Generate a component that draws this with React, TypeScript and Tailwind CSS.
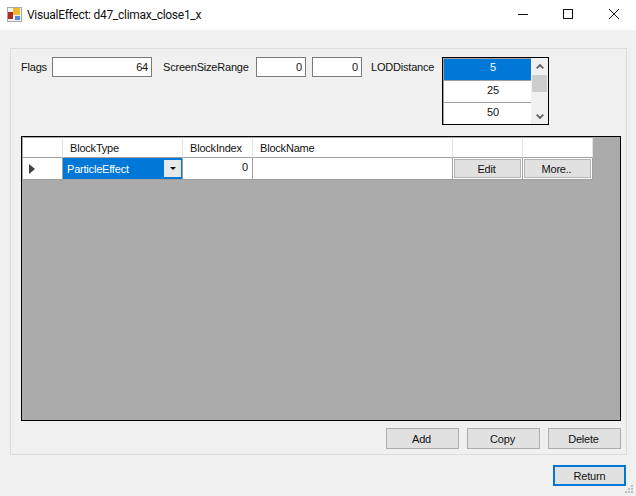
const cell = "border-r border-[#a0a0a0] flex items-center";
const headCell = "border-r border-[#e3e3e3] border-b border-b-[#a0a0a0] flex items-center pl-[7px] pt-px";

function WinButton({ label }: { label: string }) {
  return (
    <button className="h-[21px] w-[73px] border border-[#adadad] bg-[#e1e1e1] pr-[2px] pt-px text-[11px] text-[#111] tracking-[-0.2px]">
      {label}
    </button>
  );
}

function Field({ value, width }: { value: string; width: string }) {
  return (
    <div className={`h-[20px] ${width} border border-[#7a7a7a] bg-white flex items-center justify-end pr-[3px] pt-px text-[11px] text-[#111]`}>
      {value}
    </div>
  );
}

function GridButton({ label }: { label: string }) {
  return (
    <div className="h-full w-[70px] border-r border-[#a0a0a0] p-px">
      <div className="h-full border border-[#b4b4b4] bg-[#e1e1e1] flex items-center justify-center pt-px pr-[2px] text-[11px] text-[#111]">
        {label}
      </div>
    </div>
  );
}

function LodList() {
  return (
    <div className="ml-[7px] h-[68px] w-[107px] border border-black bg-white flex">
      <div className="flex-1 flex flex-col text-[11px] text-[#111] border-l border-[#a0a0a0]">
        <div className="h-[23px] bg-[#0078d7] text-white flex items-center justify-center pl-[11px] pb-[4px] border-t border-[#a0a0a0] border-b border-b-[#a0a0a0]">5</div>
        <div className="h-[22px] flex items-center justify-center pl-[11px] pb-[3px] border-b border-[#a0a0a0]">25</div>
        <div className="flex-1 flex items-center justify-center pl-[11px] pb-[2px]">50</div>
      </div>
      <div className="w-[17px] bg-[#f0f0f0] flex flex-col items-center justify-between">
        <div className="w-full">
          <div className="h-[17px] flex items-center justify-center">
            <svg width="8" height="5" viewBox="0 0 8 5">
              <path d="M0.7 4.3 L4 1 L7.3 4.3" fill="none" stroke="#606060" strokeWidth="1.8" />
            </svg>
          </div>
          <div className="h-[17px] w-[15px] mx-auto bg-[#cdcdcd]" />
        </div>
        <div className="h-[15px] flex items-center justify-center">
          <svg width="8" height="5" viewBox="0 0 8 5">
            <path d="M0.7 0.7 L4 4 L7.3 0.7" fill="none" stroke="#606060" strokeWidth="1.8" />
          </svg>
        </div>
      </div>
    </div>
  );
}

function Grid() {
  return (
    <div className="mt-[11px] h-[285px] border border-black bg-[#ababab] pl-px pt-px">
      <div className="w-[570px] h-[20px] flex bg-white text-[11px] text-[#111] tracking-[-0.2px]">
        <div className={`${headCell} w-[40px]`} />
        <div className={`${headCell} w-[120px]`}>BlockType</div>
        <div className={`${headCell} w-[70px]`}>BlockIndex</div>
        <div className={`${headCell} w-[200px]`}>BlockName</div>
        <div className={`${headCell} w-[70px]`} />
        <div className={`${headCell} w-[70px]`} />
      </div>
      <div className="w-[570px] h-[22px] flex bg-white text-[11px] text-[#111] tracking-[-0.2px] border-b border-[#a0a0a0]">
        <div className={`${cell} w-[40px] pl-[6px]`}>
          <svg width="6" height="10" viewBox="0 0 6 10">
            <path d="M0 0 L6 5 L0 10 Z" fill="#404040" />
          </svg>
        </div>
        <div className={`${cell} w-[120px] bg-[#0078d7] text-white pl-[4px] pt-px justify-between`}>
          ParticleEffect
          <div className="h-[17px] w-[17px] mr-px mb-px bg-[#e9e9e9] flex items-center justify-center">
            <svg width="6" height="3" viewBox="0 0 6 3">
              <path d="M0 0 H6 L3 3 Z" fill="#111" />
            </svg>
          </div>
        </div>
        <div className={`${cell} w-[70px] justify-end pr-[4px] pb-[2px]`}>0</div>
        <div className={`${cell} w-[200px]`} />
        <GridButton label="Edit" />
        <GridButton label="More.." />
      </div>
    </div>
  );
}

export default function App() {
  return (
    <div className="w-[636px] h-[496px] bg-[#f0f0f0] flex flex-col font-['Liberation_Sans',sans-serif] overflow-hidden relative">
      <div className="h-[30px] bg-white flex items-center pl-[7px] shrink-0">
        <svg width="15" height="15" viewBox="0 0 15 15" className="mt-[-2px]">
          <rect x="0.5" y="0.5" width="14" height="14" fill="#f4f4f4" stroke="#a8a8a8" />
          <rect x="1" y="5" width="5" height="7" fill="#b8281c" />
          <rect x="6" y="1" width="7" height="7" fill="#f0b92c" />
          <rect x="8" y="9" width="5" height="4" fill="#4f8fe0" />
        </svg>
        <span className="ml-[5px] text-[12px] text-[#111] whitespace-nowrap tracking-[-0.27px] font-['Roboto',sans-serif]">VisualEffect: d47_climax_close1_x</span>
        <div className="ml-auto flex items-center text-[#111] mt-[-2px]">
          <div className="w-[45px] flex justify-center">
            <svg width="10" height="10" viewBox="0 0 10 10"><path d="M0 5.5 H10" stroke="#111" /></svg>
          </div>
          <div className="w-[46px] flex justify-center">
            <svg width="10" height="10" viewBox="0 0 10 10"><rect x="0.5" y="0.5" width="9" height="9" fill="none" stroke="#111" /></svg>
          </div>
          <div className="w-[45px] flex justify-center">
            <svg width="10" height="10" viewBox="0 0 10 10"><path d="M0 0 L10 10 M10 0 L0 10" stroke="#111" /></svg>
          </div>
        </div>
      </div>

      <div className="mt-[18px] ml-[10px] w-[617px] h-[407px] border border-[#dcdcdc] pt-[8px] pl-[10px] pr-[5px]">
        <div className="h-[68px] flex items-start text-[11px] text-[#111] tracking-[-0.2px]">
          <span className="w-[24px] whitespace-nowrap leading-[20px]">Flags</span>
          <div className="ml-[7px]"><Field value="64" width="w-[100px]" /></div>
          <span className="ml-[11px] w-[85px] whitespace-nowrap leading-[20px]">ScreenSizeRange</span>
          <div className="ml-[8px]"><Field value="0" width="w-[50px]" /></div>
          <div className="ml-[6px]"><Field value="0" width="w-[50px]" /></div>
          <span className="ml-[9px] w-[64px] whitespace-nowrap leading-[20px]">LODDistance</span>
          <LodList />
        </div>
        <Grid />
        <div className="mt-[7px] flex justify-end gap-[8px]">
          <WinButton label="Add" />
          <WinButton label="Copy" />
          <WinButton label="Delete" />
        </div>
      </div>

      <div className="mt-[10px] flex justify-end pr-[10px]">
        <button className="h-[21px] w-[73px] border-2 border-[#0078d7] bg-[#e1e1e1] pt-px text-[11px] text-[#111] tracking-[-0.2px]">Return</button>
      </div>

      {/* size grip */}
      <svg width="9" height="9" viewBox="0 0 9 9" className="absolute right-[2px] bottom-[2px]">
        <g fill="#bdbdbd">
          <rect x="6" y="0" width="2" height="2" />
          <rect x="3" y="3" width="2" height="2" />
          <rect x="6" y="3" width="2" height="2" />
          <rect x="0" y="6" width="2" height="2" />
          <rect x="3" y="6" width="2" height="2" />
          <rect x="6" y="6" width="2" height="2" />
        </g>
      </svg>
    </div>
  );
}
